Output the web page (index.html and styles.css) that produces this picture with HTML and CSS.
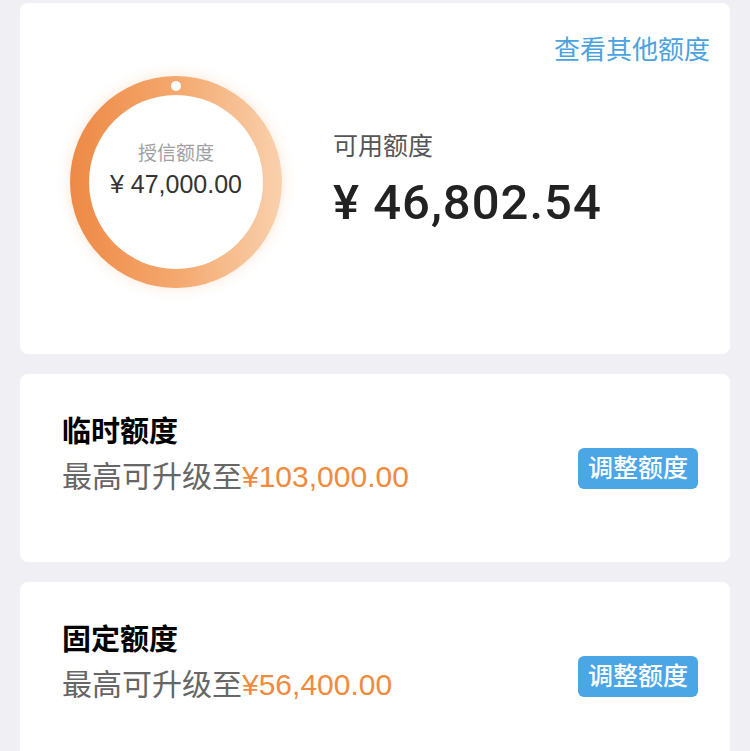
FILE: index.html
```html
<!DOCTYPE html>
<html>
<head>
    <meta charset="utf-8">
    <meta name="viewport" content="width=device-width, initial-scale=1.0">
    <link rel="stylesheet" href="styles.css">
</head>
<body>
    <div class="page">
        <div class="card overview">
            <div class="overview-top">
                <a class="other-link">查看其他额度</a>
            </div>
            <div class="overview-body">
                <div class="ring">
                    <span class="ring-dot"></span>
                    <div class="ring-inner">
                        <div class="ring-label">授信额度</div>
                        <div class="ring-value">¥ 47,000.00</div>
                    </div>
                </div>
                <div class="available">
                    <div class="available-label">可用额度</div>
                    <div class="available-value">¥ 46,802.54</div>
                </div>
            </div>
        </div>

        <div class="card quota">
            <div class="quota-text">
                <div class="quota-title">临时额度</div>
                <div class="quota-desc">最高可升级至<span class="amount">¥103,000.00</span></div>
            </div>
            <button class="adjust-btn">调整额度</button>
        </div>

        <div class="card quota">
            <div class="quota-text">
                <div class="quota-title">固定额度</div>
                <div class="quota-desc">最高可升级至<span class="amount">¥56,400.00</span></div>
            </div>
            <button class="adjust-btn">调整额度</button>
        </div>
    </div>
</body>
</html>
```

FILE: styles.css
```css
body {
    margin: 0;
    background-color: #efeff4;
    font-family: 'Liberation Sans', 'Noto Sans CJK SC', sans-serif;
}

.page {
    padding: 3px 20px 20px;
    display: flex;
    flex-direction: column;
    gap: 20px;
}

.card {
    background-color: #ffffff;
    border-radius: 8px;
    box-sizing: border-box;
}

/* 总额度卡片 */
.overview {
    height: 351px;
    padding: 32px 20px 0 50px;
}

.overview-top {
    display: flex;
    justify-content: flex-end;
}

.other-link {
    color: #4aa3df;
    font-size: 26px;
    line-height: 30px;
    cursor: pointer;
}

.overview-body {
    display: flex;
    align-items: center;
    margin-top: 11px;
}

.ring {
    position: relative;
    width: 212px;
    height: 212px;
    padding: 19px;
    box-sizing: border-box;
    border-radius: 50%;
    background: linear-gradient(90deg, #ee8945 0%, #f4a86e 50%, #f9d1ad 100%);
    box-shadow: 0 0 14px rgba(240, 140, 70, 0.22);
    flex-shrink: 0;
}

.ring-dot {
    position: absolute;
    top: 5px;
    left: 101px;
    width: 10px;
    height: 10px;
    border-radius: 50%;
    background-color: #ffffff;
}

.ring-inner {
    width: 100%;
    height: 100%;
    border-radius: 50%;
    background-color: #ffffff;
    display: flex;
    flex-direction: column;
    align-items: center;
    justify-content: center;
    padding-bottom: 24px;
    box-sizing: border-box;
}

.ring-label {
    color: #a0a0a0;
    font-size: 19px;
    line-height: 26px;
}

.ring-value {
    color: #333;
    font-size: 25px;
    line-height: 32px;
    margin-top: 1px;
}

.available {
    margin-left: 51px;
    padding-bottom: 2px;
}

.available-label {
    color: #555;
    font-size: 25px;
    line-height: 32px;
}

.available-value {
    color: #222;
    font-family: Roboto, 'Liberation Sans', sans-serif;
    font-weight: 500;
    font-size: 49px;
    letter-spacing: 1px;
    line-height: 58px;
    margin-top: 12px;
}

/* 额度卡片 */
.quota {
    height: 188px;
    padding: 0 32px 0 42px;
    display: flex;
    align-items: center;
    justify-content: space-between;
}

.quota-text {
    margin-bottom: 25px;
}

.quota-title {
    color: #000;
    font-size: 29px;
    font-weight: bold;
    line-height: 32px;
}

.quota-desc {
    color: #666;
    font-size: 30px;
    line-height: 36px;
    margin-top: 11px;
}

.amount {
    color: #f08a3d;
}

.adjust-btn {
    background-color: #4ba6e6;
    color: #fff;
    border: none;
    border-radius: 6px;
    font-family: 'Liberation Sans', 'Noto Sans CJK SC', sans-serif;
    font-size: 25px;
    font-weight: 500;
    line-height: 41px;
    height: 41px;
    padding: 0 10px;
    cursor: pointer;
}
```
